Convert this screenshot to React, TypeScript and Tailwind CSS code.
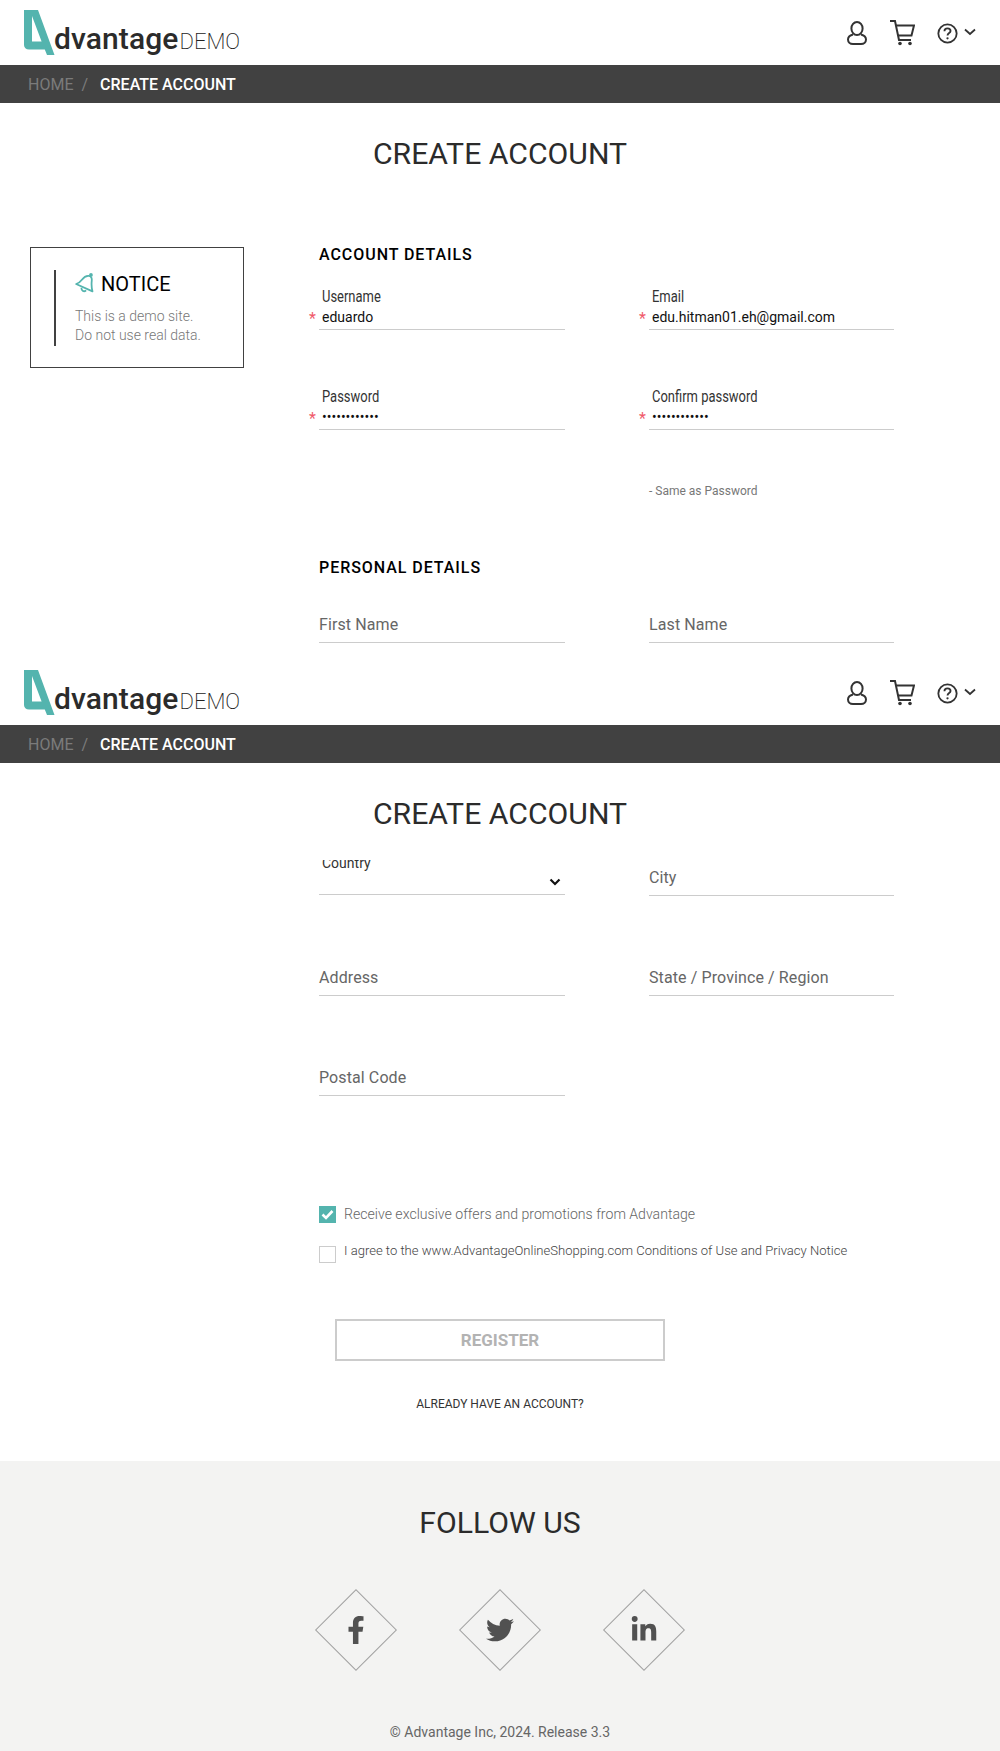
import { FaFacebookF, FaLinkedinIn, FaTwitter } from "react-icons/fa";

function Logo() {
  return (
    <div className="flex items-end">
      <svg width="42" height="46" viewBox="0 0 42 46" className="mt-[10px] ml-[23px] shrink-0">
        <path
          d="M1 0H15L31.5 45H24L21.8 39.5H6C3 39.5 1 37.5 1 35Z M9 6V31.5H18.6Z"
          fill="#54b4ae"
          fillRule="evenodd"
        />
      </svg>
      <span className="mb-[-1px] ml-[-11px] text-[30px] leading-[36px] font-medium tracking-[0.1px] text-[#2b2b2b]">dvantage</span>
      <span className="mb-[-1px] ml-[1px] text-[22px] leading-[30px] font-extralight text-[#222]">DEMO</span>
    </div>
  );
}

function UserIcon() {
  return (
    <svg width="22" height="26" viewBox="0 0 22 26" fill="none" stroke="#333" strokeWidth="2">
      <ellipse cx="11" cy="8.5" rx="5.6" ry="6.5" />
      <path d="M7 14.5C3.5 15.5 2 17 2 19.5C2 22 4 24 7 24H15C18 24 20 22 20 19.5C20 17 18.5 15.5 15 14.5" />
    </svg>
  );
}

function CartIcon() {
  return (
    <svg width="26" height="26" viewBox="0 0 26 26" fill="none" stroke="#333" strokeWidth="2" className="mr-[1px]">
      <path d="M1 1H6L10 20H22" />
      <path d="M7 5.5H25L22.5 15.5H9" />
      <circle cx="11" cy="23.5" r="1.8" fill="#333" stroke="none" />
      <circle cx="21" cy="23.5" r="1.8" fill="#333" stroke="none" />
    </svg>
  );
}

function HelpIcon() {
  return (
    <div className="flex items-center gap-[6px]">
      <svg width="21" height="21" viewBox="0 0 22 22" fill="none" stroke="#333" strokeWidth="1.9">
        <circle cx="11" cy="11" r="9.6" />
        <path d="M7.8 8.6C7.8 6.7 9.2 5.6 11 5.6C12.8 5.6 14.2 6.7 14.2 8.4C14.2 10.6 11 10.6 11 13.2" />
        <circle cx="11" cy="16" r="1.2" fill="#333" stroke="none" />
      </svg>
      <svg width="12" height="8" viewBox="0 0 12 8" fill="none" stroke="#333" strokeWidth="1.8" className="mb-[3px]">
        <path d="M1 1.5L6 6L11 1.5" />
      </svg>
    </div>
  );
}

function Header() {
  return (
    <header>
      <div className="flex h-[65px] items-start justify-between">
        <Logo />
        <div className="flex items-center gap-[21px] pt-[20px] pr-[24px]">
          <UserIcon />
          <CartIcon />
          <HelpIcon />
        </div>
      </div>
      <nav className="flex h-[38px] items-center bg-[#414141] pt-[1px] pl-[28px] text-[16px]">
        <span className="text-[#7b7b7b]">HOME</span>
        <span className="ml-[8px] text-[#7b7b7b]">/</span>
        <span className="ml-[12px] font-medium text-white">CREATE ACCOUNT</span>
      </nav>
      <h1 className="pt-[33px] text-center text-[30.2px] leading-[36px] text-[#2b2b2b]">CREATE ACCOUNT</h1>
    </header>
  );
}

function Field({ label, value, required }: { label: string; value?: string; required?: boolean }) {
  if (!value) {
    return (
      <div className="flex h-[33px] items-center border-b border-[#ccc] pb-[3px] text-[16px] tracking-[0.1px] text-[#666]">
        {label}
      </div>
    );
  }
  return (
    <div className="relative h-[45px] border-b border-[#ccc] pt-[3px] pl-[3px]">
      <div className="origin-left scale-x-[0.81] text-[16px] leading-[18px] whitespace-nowrap text-[#333]">{label}</div>
      <div className="mt-[2px] text-[14px] leading-[18px] text-[#111]">{value}</div>
      {required && <span className="absolute top-[25px] left-[-10px] text-[16px] leading-[18px] text-[#f05a6a]">*</span>}
    </div>
  );
}

function FieldRow({ children, className }: { children: React.ReactNode; className?: string }) {
  return <div className={`grid grid-cols-[246px_245px] gap-x-[84px] ${className ?? ""}`}>{children}</div>;
}

function SectionTitle({ children }: { children: React.ReactNode }) {
  return <h2 className="text-[16px] leading-[20px] font-medium tracking-[0.95px] text-black">{children}</h2>;
}

function Notice() {
  return (
    <aside className="ml-[30px] h-[121px] w-[214px] border border-[#414141] pt-[22px] pl-[23px]">
      <div className="h-[76px] border-l-2 border-[#414141] pl-[19px]">
        <div className="flex items-center gap-[7px] pt-[2px]">
          <svg width="19" height="22" viewBox="0 0 18 21" fill="none" stroke="#54b4ae" strokeWidth="1.7">
            <path
              d="M1 10.5C3.5 10 5 8.5 6.5 6.5C8 4.5 10.5 2.5 13 2.8C15.5 3.1 16.2 5 15.9 7.5C15.6 10.5 15.6 14 16.6 17.5Z"
              strokeLinejoin="round"
            />
            <circle cx="15.2" cy="1.8" r="0.9" />
            <path d="M6 14C6 17 8.5 18.5 10.5 16.5" />
          </svg>
          <span className="text-[20px] leading-[24px] text-black">NOTICE</span>
        </div>
        <p className="mt-[11px] text-[14px] leading-[19px] font-light text-[#777]">
          This is a demo site.
          <br />
          Do not use real data.
        </p>
      </div>
    </aside>
  );
}

function Social({ children }: { children: React.ReactNode }) {
  return (
    <div className="flex h-[58px] w-[58px] rotate-45 items-center justify-center border border-[#a3a3a3]">
      <div className="-rotate-45 text-[28px] text-[#515151]">{children}</div>
    </div>
  );
}

export default function App() {
  return (
    <div className="font-['Roboto',sans-serif]">
      <section className="h-[660px] overflow-hidden">
        <Header />
        <div className="flex pt-[61px]">
          <div className="w-[319px] shrink-0 pt-[14px]">
            <Notice />
          </div>
          <div>
            <div className="pt-[12px]">
              <SectionTitle>ACCOUNT DETAILS</SectionTitle>
            </div>
            <FieldRow className="mt-[20px]">
              <Field label="Username" value="eduardo" required />
              <Field label="Email" value="edu.hitman01.eh@gmail.com" required />
            </FieldRow>
            <FieldRow className="mt-[55px]">
              <Field label="Password" value="••••••••••••" required />
              <Field label="Confirm password" value="••••••••••••" required />
            </FieldRow>
            <FieldRow className="mt-[53px]">
              <div />
              <p className="text-[12px] leading-[16px] text-[#777]">- Same as Password</p>
            </FieldRow>
            <div className="mt-[59px]">
              <SectionTitle>PERSONAL DETAILS</SectionTitle>
            </div>
            <FieldRow className="mt-[32px]">
              <Field label="First Name" />
              <Field label="Last Name" />
            </FieldRow>
          </div>
        </div>
      </section>

      <section className="h-[801px]">
        <Header />
        <div className="pl-[319px]">
          <div className="mt-[28px]">
            <FieldRow>
              <div className="relative h-[35px] overflow-hidden border-b border-[#ccc]">
                <div className="mt-[-5px] pl-[3px] text-[14px] leading-[16px] text-[#333]">Country</div>
                <svg width="12" height="8" viewBox="0 0 12 8" fill="none" stroke="#111" strokeWidth="2.2" className="absolute right-[4px] bottom-[8px]">
                  <path d="M1.5 1.5L6 6L10.5 1.5" />
                </svg>
              </div>
              <div className="pt-[3px]">
                <Field label="City" />
              </div>
            </FieldRow>
            <FieldRow className="mt-[67px]">
              <Field label="Address" />
              <Field label="State / Province / Region" />
            </FieldRow>
            <FieldRow className="mt-[67px]">
              <Field label="Postal Code" />
            </FieldRow>
          </div>

          <div className="mt-[109px] flex items-center gap-[8px]">
            <div className="flex h-[17px] w-[17px] items-center justify-center bg-[#54b4ae]">
              <svg width="13" height="11" viewBox="0 0 13 11" fill="none" stroke="#fff" strokeWidth="2.6">
                <path d="M1.5 5.5L5 9L11.5 2" />
              </svg>
            </div>
            <span className="text-[14.1px] leading-[18px] font-light text-[#666]">
              Receive exclusive offers and promotions from Advantage
            </span>
          </div>
          <div className="mt-[18px] flex items-start gap-[8px]">
            <div className="mt-[5px] h-[17px] w-[17px] border border-[#ccc]" />
            <span className="pt-[1px] text-[13.05px] leading-[18px] font-light text-[#444]">
              I agree to the www.AdvantageOnlineShopping.com Conditions of Use and Privacy Notice
            </span>
          </div>
          <div className="mt-[56px] ml-[16px] flex h-[42px] w-[330px] items-center justify-center border-2 border-[#ccc] pt-[1px] text-[17px] font-bold text-[#b3b3b3]">
            REGISTER
          </div>
          <div className="mt-[35px] ml-[16px] w-[330px] text-center text-[12px] leading-[16px] text-[#333]">
            ALREADY HAVE AN ACCOUNT?
          </div>
        </div>
      </section>

      <footer className="h-[290px] bg-[#f3f3f2] pt-[44px] text-center">
        <h3 className="text-[30.2px] leading-[36px] text-[#2b2b2b]">FOLLOW US</h3>
        <div className="mt-[60px] flex justify-center gap-[86px]">
          <Social><FaFacebookF /></Social>
          <Social><FaTwitter /></Social>
          <Social><FaLinkedinIn /></Social>
        </div>
        <p className="mt-[64px] text-[14px] leading-[18px] text-[#666]">© Advantage Inc, 2024. Release 3.3</p>
      </footer>
    </div>
  );
}
